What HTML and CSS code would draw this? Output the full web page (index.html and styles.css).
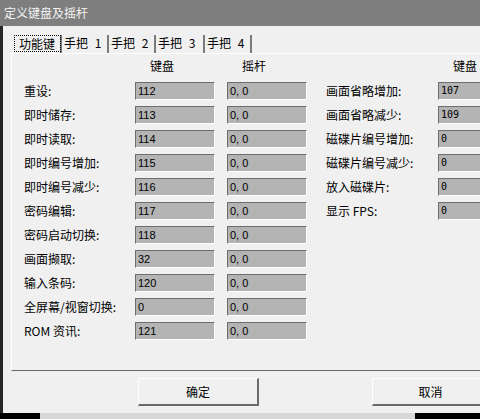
FILE: index.html
```html
<!DOCTYPE html>
<html lang="zh-CN">
<head>
    <meta charset="UTF-8">
    <title>定义键盘及摇杆</title>
    <link rel="stylesheet" href="styles.css">
</head>
<body>
    <div class="dialog">
        <div class="titlebar">定义键盘及摇杆</div>

        <div class="client">
            <div class="tabs">
                <div class="tab tab-active"><span class="focus">功能键</span></div>
                <div class="tab">手把 1</div>
                <div class="tab">手把 2</div>
                <div class="tab tab-wide">手把 3</div>
                <div class="tab">手把 4</div>
            </div>

            <div class="panel">
                <div class="grid">
                    <div></div>
                    <div class="head">键盘</div>
                    <div class="head">摇杆</div>
                    <div></div>
                    <div class="head">键盘</div>
                </div>

                <div class="grid row">
                    <div class="label">重设:</div>
                    <div class="cell"><span class="field">112</span></div>
                    <div class="cell"><span class="field">0, 0</span></div>
                    <div class="label">画面省略增加:</div>
                    <div class="cell"><span class="field thin">107</span></div>
                </div>
                <div class="grid row">
                    <div class="label">即时储存:</div>
                    <div class="cell"><span class="field">113</span></div>
                    <div class="cell"><span class="field">0, 0</span></div>
                    <div class="label">画面省略减少:</div>
                    <div class="cell"><span class="field thin">109</span></div>
                </div>
                <div class="grid row">
                    <div class="label">即时读取:</div>
                    <div class="cell"><span class="field">114</span></div>
                    <div class="cell"><span class="field">0, 0</span></div>
                    <div class="label">磁碟片编号增加:</div>
                    <div class="cell"><span class="field thin">0</span></div>
                </div>
                <div class="grid row">
                    <div class="label">即时编号增加:</div>
                    <div class="cell"><span class="field">115</span></div>
                    <div class="cell"><span class="field">0, 0</span></div>
                    <div class="label">磁碟片编号减少:</div>
                    <div class="cell"><span class="field thin">0</span></div>
                </div>
                <div class="grid row">
                    <div class="label">即时编号减少:</div>
                    <div class="cell"><span class="field">116</span></div>
                    <div class="cell"><span class="field">0, 0</span></div>
                    <div class="label">放入磁碟片:</div>
                    <div class="cell"><span class="field thin">0</span></div>
                </div>
                <div class="grid row">
                    <div class="label">密码编辑:</div>
                    <div class="cell"><span class="field">117</span></div>
                    <div class="cell"><span class="field">0, 0</span></div>
                    <div class="label">显示 FPS:</div>
                    <div class="cell"><span class="field thin">0</span></div>
                </div>
                <div class="grid row">
                    <div class="label">密码启动切换:</div>
                    <div class="cell"><span class="field">118</span></div>
                    <div class="cell"><span class="field">0, 0</span></div>
                </div>
                <div class="grid row">
                    <div class="label">画面撷取:</div>
                    <div class="cell"><span class="field">32</span></div>
                    <div class="cell"><span class="field">0, 0</span></div>
                </div>
                <div class="grid row">
                    <div class="label">输入条码:</div>
                    <div class="cell"><span class="field">120</span></div>
                    <div class="cell"><span class="field">0, 0</span></div>
                </div>
                <div class="grid row">
                    <div class="label">全屏幕/视窗切换:</div>
                    <div class="cell"><span class="field">0</span></div>
                    <div class="cell"><span class="field">0, 0</span></div>
                </div>
                <div class="grid row">
                    <div class="label">ROM 资讯:</div>
                    <div class="cell"><span class="field">121</span></div>
                    <div class="cell"><span class="field">0, 0</span></div>
                </div>
            </div>

            <div class="buttons">
                <div class="btn">确定</div>
                <div class="btn btn-cancel">取消</div>
            </div>
        </div>

        <div class="taskbar"><span class="taskbar-strip"></span></div>
    </div>
</body>
</html>
```

FILE: styles.css
```css
* {
    margin: 0;
    padding: 0;
    box-sizing: border-box;
}

body {
    font-family: "Noto Sans CJK SC", "Liberation Sans", sans-serif;
    font-size: 12px;
    color: #000000;
    background: #000000;
    width: 480px;
    height: 419px;
    overflow: hidden;
}

.dialog {
    width: 480px;
    height: 419px;
    display: flex;
    flex-direction: column;
}

.titlebar {
    height: 26px;
    line-height: 25px;
    padding-left: 4px;
    background: #7f7f7f;
    color: #f4f4f4;
    flex-shrink: 0;
}

.client {
    flex: 1;
    background: #f0f0f0;
    border-left: 3px solid #262626;
    padding: 9px 0 0 9px;
    overflow: hidden;
}

/* onglets */
.tabs {
    display: flex;
    height: 18px;
}

.tab {
    width: 47px;
    height: 18px;
    line-height: 16px;
    padding-left: 2px;
    border-right: 2px solid #7a7a7a;
    white-space: nowrap;
    word-spacing: 4px;
}

.tab-wide {
    width: 49px;
}

.tab-active {
    width: 50px;
    padding-left: 2px;
}

.focus {
    display: inline-block;
    width: 47px;
    height: 17px;
    line-height: 15px;
    padding-left: 4px;
    border: 1px dotted #000000;
}

.panel {
    margin-left: -1px;
    width: 480px;
    height: 318px;
    border-top: 1px solid #ffffff;
    border-left: 1px solid #ffffff;
    border-bottom: 1px solid #6a6a6a;
    padding: 4px 0 0 12px;
}

.grid {
    display: grid;
    grid-template-columns: 111px 92px 99px 112px 80px;
    height: 16px;
    line-height: 16px;
    margin-bottom: 8px;
}

.head {
    padding-left: 15px;
}

.row {
    height: 24px;
    line-height: 18px;
    margin-bottom: 0;
}

.label {
    white-space: nowrap;
}

.field {
    display: block;
    width: 80px;
    height: 18px;
    line-height: 16px;
    padding-left: 2px;
    background: #b4b4b4;
    border-top: 1px solid #6e6e6e;
    border-left: 1px solid #6e6e6e;
    border-right: 1px solid #ffffff;
    border-bottom: 1px solid #ffffff;
    font-family: "Liberation Sans", sans-serif;
    font-size: 11px;
}

.thin {
    font-family: "DejaVu Sans Mono", monospace;
    font-size: 10px;
}

.buttons {
    display: flex;
    gap: 113px;
    padding: 7px 0 0 126px;
}

.btn {
    width: 121px;
    height: 28px;
    line-height: 26px;
    text-align: center;
    background: #f0f0f0;
    border-top: 1px solid #ffffff;
    border-left: 1px solid #ffffff;
    border-right: 2px solid #6a6a6a;
    border-bottom: 2px solid #6a6a6a;
    flex-shrink: 0;
}

.btn-cancel {
    width: 130px;
    padding-right: 12px;
}

.taskbar {
    height: 6px;
    background: #000000;
    flex-shrink: 0;
    padding-left: 40px;
}

.taskbar-strip {
    display: block;
    width: 375px;
    height: 6px;
    background: #d8d8d8;
}
```
